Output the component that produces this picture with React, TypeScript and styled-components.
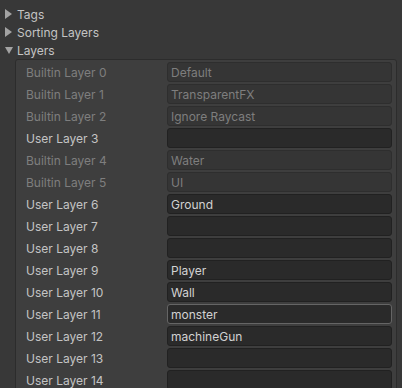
import React from 'react';
import styled, { createGlobalStyle } from 'styled-components';

const GlobalStyle = createGlobalStyle`
  html, body {
    margin: 0;
    padding: 0;
    background: #383838;
    overflow: hidden;
  }
`;

const Inspector = styled.div`
  width: 402px;
  height: 388px;
  overflow: hidden;
  background: #383838;
  font-family: Inter, 'Noto Sans', sans-serif;
  font-size: 12px;
  color: #c4c4c4;
  padding-top: 5px;
  box-sizing: border-box;
`;

const Foldout = styled.div`
  display: flex;
  align-items: center;
  height: 18px;
  padding-left: 5px;
  gap: 5px;
`;

const Arrow = styled.span<{ $open?: boolean }>`
  width: 0;
  height: 0;
  ${p =>
    p.$open
      ? `border-left: 4px solid transparent; border-right: 4px solid transparent; border-top: 7px solid #a3a3a3; margin-right: -1px;`
      : `border-top: 5px solid transparent; border-bottom: 5px solid transparent; border-left: 7px solid #a3a3a3;`}
`;

const Panel = styled.div`
  margin: 0 5px 0 15px;
  padding: 2px 4px 0 10px;
  background: #3e3e3e;
  border: 1px solid #2c2c2c;
  border-radius: 3px;
  display: flex;
  flex-direction: column;
  gap: 2px;
`;

const Row = styled.div`
  display: grid;
  grid-template-columns: 141px 1fr;
  height: 20px;
  align-items: center;
`;

const Label = styled.span<{ $disabled?: boolean }>`
  color: ${p => (p.$disabled ? '#7e7e7e' : '#c4c4c4')};
`;

const Field = styled.div<{ $disabled?: boolean; $focused?: boolean }>`
  height: 20px;
  box-sizing: border-box;
  border-radius: 3px;
  padding-left: 3px;
  display: flex;
  align-items: center;
  background: ${p => (p.$disabled ? '#353535' : '#2a2a2a')};
  border: 1px solid ${p => (p.$focused ? '#656565' : p.$disabled ? '#2e2e2e' : '#212121')};
  color: ${p => (p.$disabled ? '#7e7e7e' : '#d2d2d2')};
`;

type Layer = { label: string; value: string; builtin?: boolean; focused?: boolean };

const layers: Layer[] = [
  { label: 'Builtin Layer 0', value: 'Default', builtin: true },
  { label: 'Builtin Layer 1', value: 'TransparentFX', builtin: true },
  { label: 'Builtin Layer 2', value: 'Ignore Raycast', builtin: true },
  { label: 'User Layer 3', value: '' },
  { label: 'Builtin Layer 4', value: 'Water', builtin: true },
  { label: 'Builtin Layer 5', value: 'UI', builtin: true },
  { label: 'User Layer 6', value: 'Ground' },
  { label: 'User Layer 7', value: '' },
  { label: 'User Layer 8', value: '' },
  { label: 'User Layer 9', value: 'Player' },
  { label: 'User Layer 10', value: 'Wall' },
  { label: 'User Layer 11', value: 'monster', focused: true },
  { label: 'User Layer 12', value: 'machineGun' },
  { label: 'User Layer 13', value: '' },
  { label: 'User Layer 14', value: '' },
];

export default function App() {
  return (
    <>
      <GlobalStyle />
      <Inspector>
        <Foldout>
          <Arrow />
          Tags
        </Foldout>
        <Foldout>
          <Arrow />
          Sorting Layers
        </Foldout>
        <Foldout>
          <Arrow $open />
          Layers
        </Foldout>
        <Panel>
          {layers.map(l => (
            <Row key={l.label}>
              <Label $disabled={l.builtin}>{l.label}</Label>
              <Field $disabled={l.builtin} $focused={l.focused}>
                {l.value}
              </Field>
            </Row>
          ))}
        </Panel>
      </Inspector>
    </>
  );
}
